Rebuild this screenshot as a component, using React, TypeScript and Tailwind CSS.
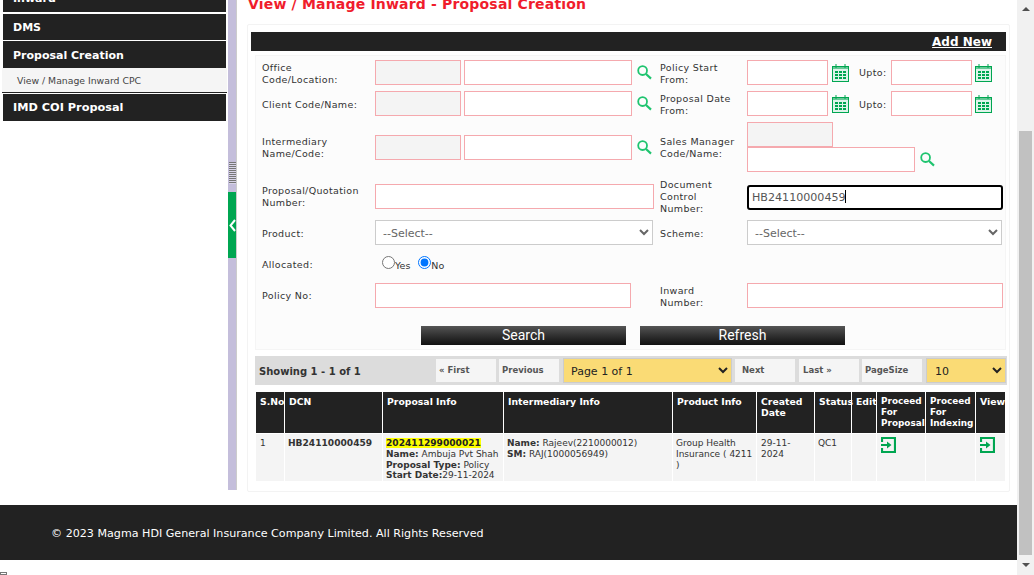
import React from "react";

const ink = "#333";

function SearchIcon() {
  return (
    <svg width="15" height="15" viewBox="0 0 15 15" fill="none" stroke="#1fc46f" strokeWidth="1.8" className="shrink-0">
      <circle cx="5.6" cy="5.6" r="4.4" />
      <path d="M9 9l5 4.6" strokeWidth="2.2" />
    </svg>
  );
}

function CalIcon() {
  return (
    <svg width="17" height="18" viewBox="0 0 17 18" className="shrink-0">
      <rect x="0.5" y="2.5" width="16" height="15" fill="#dff3ea" stroke="#00a651" />
      <rect x="0" y="2" width="17" height="3" fill="#00a651" opacity="0.55" />
      <path d="M4 0v4M13 0v4" stroke="#00a651" />
      <g fill="#00a651">
        <rect x="3" y="7" width="3" height="2" /><rect x="7" y="7" width="3" height="2" /><rect x="11" y="7" width="3" height="2" />
        <rect x="3" y="10" width="3" height="2" /><rect x="7" y="10" width="3" height="2" /><rect x="11" y="10" width="3" height="2" />
        <rect x="3" y="13" width="3" height="2" /><rect x="7" y="13" width="3" height="2" /><rect x="11" y="13" width="3" height="2" />
      </g>
    </svg>
  );
}

function EnterIcon() {
  return (
    <svg width="15" height="16" viewBox="0 0 15 16" fill="none">
      <path d="M1 5V1h13v14H1v-4" stroke="#00a651" strokeWidth="2.2" />
      <path d="M0 7h6V4.500L10.500 8 6 11.500V9H0z" fill="#00a651" />
    </svg>
  );
}

function Label({ children, w }: { children: React.ReactNode; w: string }) {
  return <div className={`${w} shrink-0 pt-[1px] text-[9.5px] leading-[12px] tracking-[0.35px] text-[#333]`}>{children}</div>;
}

function TextBox({ w, gray }: { w: string; gray?: boolean }) {
  return <input readOnly className={`${w} h-[25px] shrink-0 border border-[#f5a9ae] ${gray ? "bg-[#f4f4f4]" : "bg-white"}`} />;
}

function NavItem({ children, cls = "" }: { children: React.ReactNode; cls?: string }) {
  return (
    <div className={`ml-[3px] w-[223px] bg-[#222] pl-[10px] flex items-center text-white font-bold ${cls}`}>
      {children}
    </div>
  );
}

function PagerBox({ children, w = "w-[60px]" }: { children: React.ReactNode; w?: string }) {
  return (
    <div className={`${w} h-[23px] shrink-0 bg-[#f5f5f5] flex items-center pl-[3px] text-[8.5px] font-bold text-[#555]`}>
      {children}
    </div>
  );
}

const headers = [
  ["S.No", "w-[28px]"],
  ["DCN", "w-[97px]"],
  ["Proposal Info", "w-[120px]"],
  ["Intermediary Info", "w-[168px]"],
  ["Product Info", "w-[83px]"],
  ["Created Date", "w-[57px]"],
  ["Status", "w-[36px]"],
  ["Edit", "w-[24px]"],
  ["Proceed For Proposal", "w-[48px]"],
  ["Proceed For Indexing", "w-[49px]"],
  ["View", "w-[29px]"],
];

export default function App() {
  return (
    <div className="relative w-[1034px] h-[575px] overflow-hidden flex bg-white font-['DejaVu_Sans',sans-serif]">
      <div className="w-[1017px] shrink-0 flex flex-col">
        <div className="h-[505px] shrink-0 flex items-start">
          {/* Sidebar */}
          <div className="w-[228px] shrink-0 flex flex-col">
            <NavItem cls="h-[27px] -mt-[15px] mb-[2px] pt-[2px] text-[11px]">Inward</NavItem>
            <NavItem cls="h-[26px] mb-[1px] pt-[2px] text-[11px]">DMS</NavItem>
            <NavItem cls="h-[27px] pt-[4px] text-[11px]">Proposal Creation</NavItem>
            <div className="ml-[2px] w-[225px] h-[25px] bg-[#f5f5f5] border-b border-[#222] pl-[15px] pt-[1px] flex items-center text-[9.3px] text-[#444]">
              View / Manage Inward CPC
            </div>
            <NavItem cls="h-[27px] mt-[1px] pt-[2px] text-[11.3px]">IMD COI Proposal</NavItem>
          </div>

          {/* Splitter */}
          <div className="w-[8px] h-[490px] shrink-0 bg-[#c4bedb] flex flex-col items-center">
            <div className="mt-[162px] w-[7px] h-[22px] bg-[repeating-linear-gradient(to_bottom,#777_0,#777_1px,#d8d4e8_1px,#d8d4e8_2px)]" />
            <div className="mt-[8px] w-[8px] h-[66px] bg-[#00a651] flex items-center justify-center">
              <svg width="7" height="13" viewBox="0 0 7 13" fill="none" stroke="#fff" strokeWidth="2">
                <path d="M6 1L1.500 6.500 6 12" />
              </svg>
            </div>
          </div>
          <div className="w-[1px] h-[490px] shrink-0 bg-[#ccc]" />

          {/* Main */}
          <div className="ml-[10px] w-[763px] shrink-0 flex flex-col">
            <div className="h-[27px] -mt-[3px] ml-[1px] text-[14px] leading-[14px] font-bold text-[#f01c2c] tracking-[0.18px] whitespace-nowrap">
              View / Manage Inward - Proposal Creation
            </div>
            <div className="h-[468px] border border-[#f3f3f3] rounded-[2px] pl-[3px] pt-[7px]">
              <div className="w-[755px] h-[19px] bg-[#222] flex items-center justify-end pr-[14px]">
                <a className="text-white font-bold text-[12px] underline">Add New</a>
              </div>

              {/* Search form */}
              <div className="ml-[4px] mt-[4px] w-[751px] h-[295px] bg-[#fcfcfc] border border-[#f5f5f5] pt-[4px] pl-[6px]">
                <div className="flex items-center h-[25px]">
                  <div className="w-[398px] shrink-0 flex items-center">
                    <Label w="w-[113px] mt-[2px]">Office<br />Code/Location:</Label>
                    <TextBox w="w-[86px]" gray /><div className="w-[3px]" /><TextBox w="w-[168px]" />
                    <div className="ml-[5px]"><SearchIcon /></div>
                  </div>
                  <Label w="w-[87px] mt-[2px]">Policy Start<br />From:</Label>
                  <TextBox w="w-[81px]" />
                  <div className="ml-[4px]"><CalIcon /></div>
                  <Label w="w-[32px] ml-[10px]">Upto:</Label>
                  <TextBox w="w-[81px]" />
                  <div className="ml-[3px]"><CalIcon /></div>
                </div>

                <div className="flex items-center h-[25px] mt-[6px]">
                  <div className="w-[398px] shrink-0 flex items-center">
                    <Label w="w-[113px] mt-[2px]">Client Code/Name:</Label>
                    <TextBox w="w-[86px]" gray /><div className="w-[3px]" /><TextBox w="w-[168px]" />
                    <div className="ml-[5px]"><SearchIcon /></div>
                  </div>
                  <Label w="w-[87px] mt-[2px]">Proposal Date<br />From:</Label>
                  <TextBox w="w-[81px]" />
                  <div className="ml-[4px]"><CalIcon /></div>
                  <Label w="w-[32px] ml-[10px] mt-[2px]">Upto:</Label>
                  <TextBox w="w-[81px]" />
                  <div className="ml-[3px]"><CalIcon /></div>
                </div>

                <div className="flex items-center h-[50px] mt-[6px]">
                  <div className="w-[398px] shrink-0 flex items-center">
                    <Label w="w-[113px]">Intermediary<br />Name/Code:</Label>
                    <TextBox w="w-[86px]" gray /><div className="w-[3px]" /><TextBox w="w-[168px]" />
                    <div className="ml-[5px]"><SearchIcon /></div>
                  </div>
                  <Label w="w-[87px]">Sales Manager<br />Code/Name:</Label>
                  <div className="flex flex-col">
                    <TextBox w="w-[86px]" gray />
                    <div className="flex items-center">
                      <TextBox w="w-[168px]" />
                      <div className="ml-[5px]"><SearchIcon /></div>
                    </div>
                  </div>
                </div>

                <div className="flex items-center h-[25px] mt-[12px]">
                  <div className="w-[398px] shrink-0 flex items-center">
                    <Label w="w-[113px]">Proposal/Quotation<br />Number:</Label>
                    <TextBox w="w-[279px]" />
                  </div>
                  <Label w="w-[87px]">Document<br />Control<br />Number:</Label>
                  <div className="relative">
                    <input
                      readOnly
                      value="HB24110000459"
                      className="w-[256px] h-[25px] rounded-[3px] border-2 border-black bg-white px-[3px] text-[11.1px] text-[#555] outline-none"
                    />
                    <div className="absolute left-[98px] top-[6px] w-[1px] h-[13px] bg-black" />
                  </div>
                </div>

                <div className="flex items-center h-[25px] mt-[11px]">
                  <div className="w-[398px] shrink-0 flex items-center">
                    <Label w="w-[113px] mt-[2px]">Product:</Label>
                    <select className="w-[278px] h-[25px] border border-[#ccc] bg-white pl-[3px] pt-[1px] text-[11px] text-[#666]">
                      <option>--Select--</option>
                    </select>
                  </div>
                  <Label w="w-[87px] mt-[2px]">Scheme:</Label>
                  <select className="w-[255px] h-[25px] border border-[#ccc] bg-white pl-[3px] pt-[1px] text-[11px] text-[#666]">
                    <option>--Select--</option>
                  </select>
                </div>

                <div className="flex items-center h-[26px] mt-[6px]">
                  <Label w="w-[120px]">Allocated:</Label>
                  <label className="mt-[2px] flex items-start text-[9.5px] text-[#333]">
                    <input type="radio" name="alloc" readOnly className="m-0 w-[13px] h-[13px]" />
                    <span className="mt-[3px]">Yes</span>
                  </label>
                  <label className="mt-[2px] ml-[8px] flex items-start text-[9.5px] text-[#333]">
                    <input type="radio" name="alloc" defaultChecked className="m-0 w-[13px] h-[13px]" />
                    <span className="mt-[3px]">No</span>
                  </label>
                </div>

                <div className="flex items-center h-[25px] mt-[6px]">
                  <div className="w-[398px] shrink-0 flex items-center">
                    <Label w="w-[113px]">Policy No:</Label>
                    <TextBox w="w-[256px]" />
                  </div>
                  <Label w="w-[87px] mt-[2px]">Inward<br />Number:</Label>
                  <TextBox w="w-[256px]" />
                </div>

                <div className="flex ml-[159px] mt-[18px] gap-[14px]">
                  <button className="w-[205px] h-[19px] bg-gradient-to-b from-[#555] to-[#111] text-white text-[14px] leading-[19px] font-['Roboto',sans-serif]">Search</button>
                  <button className="w-[205px] h-[19px] bg-gradient-to-b from-[#555] to-[#111] text-white text-[14px] leading-[19px] font-['Roboto',sans-serif]">Refresh</button>
                </div>
              </div>

              {/* Pager */}
              <div className="ml-[4px] mt-[6px] w-[752px] h-[29px] bg-[#dcdcdc] flex items-center">
                <div className="w-[181px] shrink-0 pl-[4px] pt-[2px] text-[10px] font-bold text-[#333]">Showing 1 - 1 of 1</div>
                <PagerBox><span className="font-bold">« First</span></PagerBox>
                <div className="w-[3px]" />
                <PagerBox>Previous</PagerBox>
                <div className="w-[4px]" />
                <select className="w-[169px] h-[25px] border border-[#ccc] bg-[#fadb75] pl-[3px] pt-[1px] text-[11px] text-[#222]">
                  <option>Page 1 of 1</option>
                </select>
                <div className="w-[3px]" />
                <PagerBox><span className="pl-[4px]">Next</span></PagerBox>
                <div className="w-[4px]" />
                <PagerBox><span className="pl-[1px]">Last »</span></PagerBox>
                <div className="w-[3px]" />
                <PagerBox>PageSize</PagerBox>
                <div className="w-[4px]" />
                <select className="w-[80px] h-[25px] border border-[#ccc] bg-[#fadb75] pl-[4px] pt-[1px] text-[11px] text-[#222]">
                  <option>10</option>
                </select>
              </div>

              {/* Results */}
              <table className="ml-[4px] mt-[6px] table-fixed border-separate [border-spacing:1px] w-[751px]" style={{ color: ink }}>
                <colgroup>
                  {headers.map(([h, w]) => (
                    <col key={h} className={w} />
                  ))}
                </colgroup>
                <thead>
                  <tr className="h-[41px]">
                    {headers.map(([h]) => (
                      <th
                        key={h}
                        className={`bg-[#222] text-white font-bold leading-[11px] text-left align-top pl-[4px] pr-0 pt-[4px] ${h.startsWith("Proceed") ? "text-[8.9px]" : "text-[9.3px]"}`}
                      >
                        {h}
                      </th>
                    ))}
                  </tr>
                </thead>
                <tbody>
                  <tr className="h-[47px] bg-[#f4f4f4] text-[9px] leading-[10.75px] align-top">
                    <td className="pl-[4px] pt-[4px]">1</td>
                    <td className="pl-[3px] pt-[4px] font-bold text-[9.1px]">HB24110000459</td>
                    <td className="pl-[3px] pt-[4px] whitespace-nowrap">
                      <span className="bg-[#ffff00] font-bold text-[#222] text-[9.1px]">202411299000021</span><br />
                      <b>Name:</b> Ambuja Pvt Shah<br />
                      <b>Proposal Type:</b> Policy<br />
                      <b>Start Date:</b>29-11-2024
                    </td>
                    <td className="pl-[3px] pt-[4px] whitespace-nowrap">
                      <b>Name:</b> Rajeev(2210000012)<br />
                      <b>SM:</b> RAJ(1000056949)
                    </td>
                    <td className="pl-[3px] pt-[4px]">Group Health Insurance ( 4211 )</td>
                    <td className="pl-[4px] pr-[6px] pt-[4px]">29-11-2024</td>
                    <td className="pl-[3px] pt-[4px]">QC1</td>
                    <td />
                    <td className="pl-[4px] pt-[3px]"><EnterIcon /></td>
                    <td />
                    <td className="pl-[4px] pt-[3px]"><EnterIcon /></td>
                  </tr>
                </tbody>
              </table>
            </div>
          </div>
        </div>

        {/* Footer */}
        <div className="h-[55px] shrink-0 bg-[#222] flex items-center pl-[51px] pt-[3px] text-white text-[11.12px]">
          © 2023 Magma HDI General Insurance Company Limited. All Rights Reserved
        </div>
        <div className="mt-[12px] w-[7px] h-[7px] border border-[#777]" />
      </div>

      {/* Scrollbar */}
      <div className="w-[17px] shrink-0 h-full bg-[#f1f1f1] flex flex-col items-center">
        <div className="h-[131px] w-full shrink-0 flex justify-center pt-[7px]">
          <svg width="8" height="4" viewBox="0 0 8 4"><path d="M4 0l4 4H0z" fill="#505050" /></svg>
        </div>
        <div className="h-[424px] w-[13px] shrink-0 bg-[#c1c1c1]" />
        <div className="flex-1 w-full flex justify-center pt-[8px]">
          <svg width="8" height="4" viewBox="0 0 8 4"><path d="M0 0h8L4 4z" fill="#505050" /></svg>
        </div>
      </div>
    </div>
  );
}
